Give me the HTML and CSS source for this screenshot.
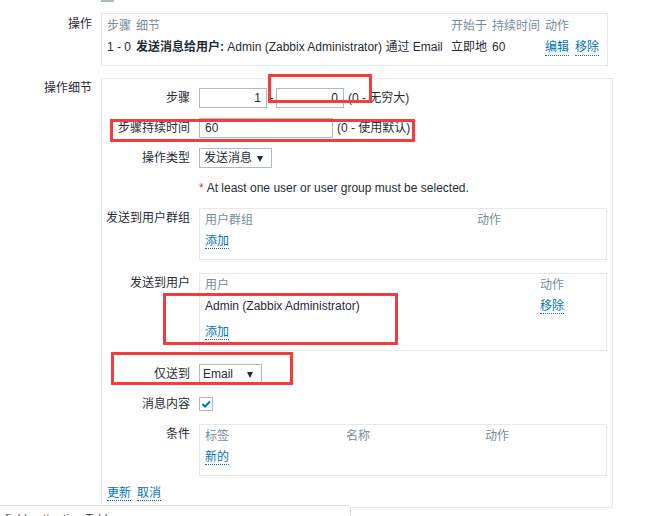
FILE: index.html
```html
<!DOCTYPE html>
<html lang="zh-CN">
<head>
    <meta charset="UTF-8">
    <title>操作细节</title>
    <link rel="stylesheet" href="styles.css">
</head>
<body>
    <div class="page">
        <div class="stub"></div>

        <div class="row top-row">
            <div class="row-label">操作</div>
            <div class="op-box">
                <div class="op-grid op-head">
                    <span>步骤</span><span>细节</span><span>开始于</span><span>持续时间</span><span>动作</span>
                </div>
                <div class="op-grid">
                    <span>1 - 0</span>
                    <span><b>发送消息给用户:</b> Admin (Zabbix Administrator) 通过 Email</span>
                    <span>立即地</span>
                    <span>60</span>
                    <span class="actions"><a href="#">编辑</a><a href="#">移除</a></span>
                </div>
            </div>
        </div>

        <div class="row detail-row">
            <div class="row-label">操作细节</div>
            <div class="detail-box">
                <div class="field">
                    <div class="field-label">步骤</div>
                    <div class="field-value">
                        <input class="num" type="text" value="1"><span class="dash">-</span><input class="num" type="text" value="0"><span class="hint">(0 - 无穷大)</span>
                    </div>
                </div>
                <div class="field">
                    <div class="field-label">步骤持续时间</div>
                    <div class="field-value">
                        <input class="wide" type="text" value="60"><span class="hint">(0 - 使用默认)</span>
                    </div>
                </div>
                <div class="field">
                    <div class="field-label">操作类型</div>
                    <div class="field-value">
                        <div class="select type-select">发送消息</div>
                    </div>
                </div>
                <div class="field note-row">
                    <div class="field-label"></div>
                    <div class="field-value note"><span class="req">*</span> At least one user or user group must be selected.</div>
                </div>
                <div class="field gap-12">
                    <div class="field-label">发送到用户群组</div>
                    <div class="field-value">
                        <div class="sub-box">
                            <div class="sub-grid groups-grid sub-head"><span>用户群组</span><span>动作</span></div>
                            <div class="sub-line"><a href="#">添加</a></div>
                        </div>
                    </div>
                </div>
                <div class="field gap-13">
                    <div class="field-label">发送到用户</div>
                    <div class="field-value">
                        <div class="sub-box">
                            <div class="sub-grid users-grid sub-head"><span>用户</span><span>动作</span></div>
                            <div class="sub-grid users-grid sub-line"><span>Admin (Zabbix Administrator)</span><span><a href="#">移除</a></span></div>
                            <div class="sub-line add-line"><a href="#">添加</a></div>
                        </div>
                    </div>
                </div>
                <div class="field gap-13">
                    <div class="field-label">仅送到</div>
                    <div class="field-value">
                        <div class="select mail-select">Email</div>
                    </div>
                </div>
                <div class="field gap-13 check-row">
                    <div class="field-label">消息内容</div>
                    <div class="field-value">
                        <span class="checkbox">
                            <svg width="12" height="12" viewBox="0 0 12 12"><polyline points="2.5,6 5,8.5 10,3.5" fill="none" stroke="#0275b8" stroke-width="2"/></svg>
                        </span>
                    </div>
                </div>
                <div class="field gap-13">
                    <div class="field-label">条件</div>
                    <div class="field-value">
                        <div class="sub-box">
                            <div class="sub-grid cond-grid sub-head"><span>标签</span><span>名称</span><span>动作</span></div>
                            <div class="sub-line"><a href="#">新的</a></div>
                        </div>
                    </div>
                </div>
                <div class="buttons"><a href="#">更新</a><a href="#">取消</a></div>
            </div>
        </div>

        <!-- red annotation frames drawn over the screenshot -->
        <div class="mark mark-1"></div>
        <div class="mark mark-2"></div>
        <div class="mark mark-3"></div>
        <div class="mark mark-4"></div>

        <div class="float-panel">fields attention Table</div>
    </div>
</body>
</html>
```

FILE: styles.css
```css
body {
    margin: 0;
    font-family: "Liberation Sans", Arial, "Noto Sans CJK SC", sans-serif;
    font-size: 12px;
    line-height: 16px;
    color: #1f2c33;
    background-color: #fff;
    overflow: hidden;
}
a {
    color: #0275b8;
    text-decoration: none;
    border-bottom: 1px dotted #0275b8;
}
.page {
    position: relative;
    width: 658px;
    height: 516px;
    overflow: hidden;
}
.stub {
    width: 13px;
    height: 2px;
    margin-left: 101px;
    background-color: #acbbc2;
}
.row {
    display: grid;
    grid-template-columns: 92px auto;
    column-gap: 9px;
    align-items: start;
}
.row-label {
    text-align: right;
    padding-top: 3px;
    height: 16px;
}
.top-row {
    margin-top: 11px;
}
.detail-row {
    margin-top: 12px;
}
.detail-row .row-label {
    padding-top: 2px;
}
.op-box {
    width: 507px;
    box-sizing: border-box;
    border: 1px solid #e6eaec;
    padding: 4px 5px 10px;
}
.op-grid {
    display: grid;
    grid-template-columns: 29px 315px 41px 53px auto;
    height: 16px;
    white-space: nowrap;
}
.op-grid + .op-grid {
    margin-top: 5px;
}
.op-head,
.sub-head {
    color: #768d99;
}
.actions {
    display: flex;
    gap: 6px;
}
.detail-box {
    position: relative;
    width: 512px;
    height: 430px;
    box-sizing: border-box;
    border: 1px solid #e6eaec;
    padding: 9px 4px 5px 0;
}
.field {
    display: grid;
    grid-template-columns: 88px 408px;
    column-gap: 9px;
    margin-top: 10px;
}
.field:first-child {
    margin-top: 0;
}
.field-label {
    text-align: right;
    padding-top: 2px;
    height: 16px;
    white-space: nowrap;
}
.field-value {
    display: flex;
    align-items: center;
    white-space: nowrap;
}
.note-row {
    margin-top: 12px;
}
.note-row .field-label {
    padding-top: 0;
}
.note {
    height: 16px;
}
.gap-12 {
    margin-top: 12px;
}
.gap-13 {
    margin-top: 13px;
}
.check-row .field-label {
    padding-top: 0;
    height: 14px;
    line-height: 14px;
}
.req {
    color: #e33734;
    margin-right: 3px;
}
input {
    height: 20px;
    box-sizing: border-box;
    border: 1px solid #acbbc2;
    font: inherit;
    color: #1f2c33;
    padding: 0 5px;
    margin: 0;
}
.num {
    width: 68px;
    text-align: right;
}
.wide {
    width: 134px;
}
.dash {
    width: 9px;
    text-align: center;
}
.hint {
    margin-left: 4px;
}
.select {
    position: relative;
    height: 20px;
    box-sizing: border-box;
    border: 1px solid #acbbc2;
    padding: 1px 0 0 4px;
    line-height: 17px;
}
.select::after {
    content: "";
    position: absolute;
    top: 7px;
    right: 8px;
    border-left: 3px solid transparent;
    border-right: 3px solid transparent;
    border-top: 6px solid #1f2c33;
}
.type-select {
    width: 73px;
}
.mail-select {
    width: 63px;
    padding-left: 3px;
}
.checkbox {
    display: flex;
    align-items: center;
    justify-content: center;
    width: 14px;
    height: 14px;
    box-sizing: border-box;
    border: 1px solid #acbbc2;
}
.sub-box {
    width: 408px;
    box-sizing: border-box;
    border: 1px solid #e6eaec;
    padding: 3px 5px 10px;
}
.sub-grid {
    display: grid;
}
.sub-head,
.sub-line {
    height: 16px;
}
.sub-line {
    margin-top: 5px;
}
.add-line {
    margin-top: 10px;
}
.groups-grid {
    grid-template-columns: 272px auto;
}
.users-grid {
    grid-template-columns: 335px auto;
}
.cond-grid {
    grid-template-columns: 141px 139px auto;
}
.buttons {
    display: flex;
    gap: 6px;
    height: 16px;
    margin-top: 9px;
    padding-left: 5px;
}
.mark {
    position: absolute;
    border: 3px solid #f53b3b;
    box-sizing: border-box;
}
.mark-1 {
    left: 268px;
    top: 74px;
    width: 104px;
    height: 29px;
}
.mark-2 {
    left: 110px;
    top: 119px;
    width: 305px;
    height: 23px;
}
.mark-3 {
    left: 163px;
    top: 293px;
    width: 235px;
    height: 52px;
}
.mark-4 {
    left: 111px;
    top: 352px;
    width: 182px;
    height: 33px;
}
.float-panel {
    position: absolute;
    left: -10px;
    top: 505px;
    width: 361px;
    height: 40px;
    box-sizing: border-box;
    border: 1px solid #dcdfe2;
    border-radius: 4px;
    background-color: #fff;
    padding: 5px 14px;
    color: #555;
}
```
